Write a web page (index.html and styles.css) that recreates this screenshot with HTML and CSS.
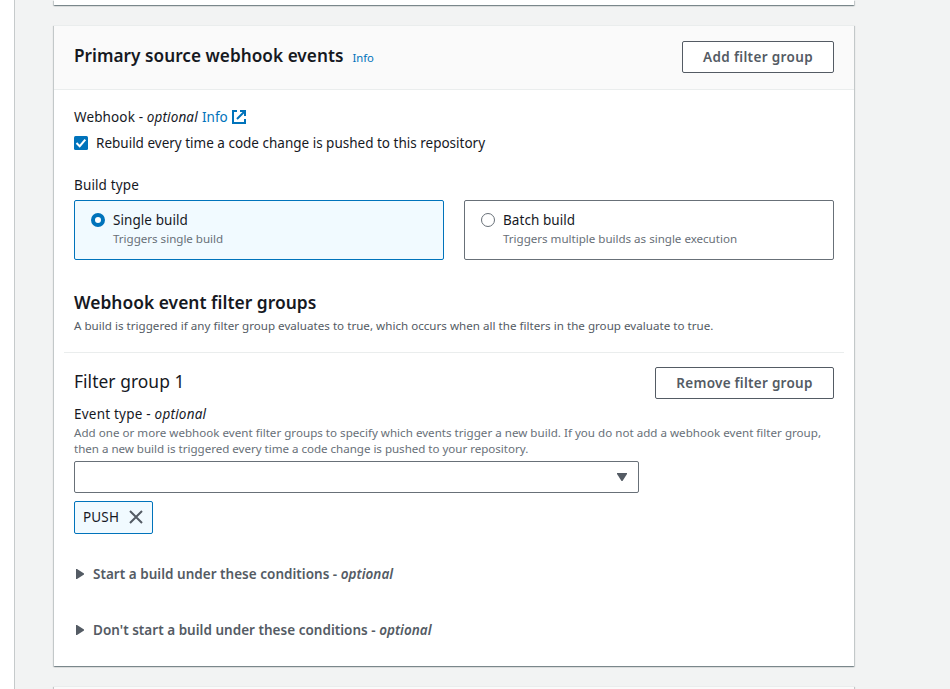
FILE: index.html
```
<!DOCTYPE html>
<html lang="en">
<head>
<meta charset="utf-8">
<title>Primary source webhook events</title>
<link rel="stylesheet" href="styles.css">
</head>
<body>
<main class="page">
  <section class="card card-previous"></section>

  <section class="card card-main">
    <header class="card-header">
      <h2 class="title">Primary source webhook events</h2>
      <a class="info-small">Info</a>
      <button class="button button-add">Add filter group</button>
    </header>

    <div class="card-body">
      <div class="label webhook-label">
        <span class="webhook-text">Webhook - <em>optional</em></span>
        <a class="info">Info</a>
        <svg class="external" viewBox="0 0 14 14" width="14" height="14" fill="none" stroke="#0073bb" stroke-width="2">
          <path d="M5 1H1v12h12V9"/>
          <path d="M8 1h5v5M13 1 5 9"/>
        </svg>
      </div>
      <label class="check-row">
        <svg class="checkbox" viewBox="0 0 14 14" width="14" height="14">
          <rect width="14" height="14" rx="1.5" fill="#0073bb"/>
          <path d="M2.5 7l3.2 3.2L11.3 3.6" fill="none" stroke="#fff" stroke-width="2"/>
        </svg>
        <span>Rebuild every time a code change is pushed to this repository</span>
      </label>

      <div class="label build-label">Build type</div>
      <div class="tiles">
        <div class="tile tile-selected">
          <span class="radio radio-on"></span>
          <div>
            <div class="tile-title">Single build</div>
            <div class="hint">Triggers single build</div>
          </div>
        </div>
        <div class="tile">
          <span class="radio"></span>
          <div>
            <div class="tile-title">Batch build</div>
            <div class="hint">Triggers multiple builds as single execution</div>
          </div>
        </div>
      </div>

      <h3 class="groups-title">Webhook event filter groups</h3>
      <p class="groups-text">A build is triggered if any filter group evaluates to true, which occurs when all the filters in the group evaluate to true.</p>
      <hr class="divider">

      <div class="group-head">
        <h4 class="group-title">Filter group 1</h4>
        <button class="button button-remove">Remove filter group</button>
      </div>
      <div class="label event-label">Event type - <em>optional</em></div>
      <p class="event-hint">Add one or more webhook event filter groups to specify which events trigger a new build. If you do not add a webhook event filter group,<br><span class="line-two">then a new build is triggered every time a code change is pushed to your repository.</span></p>
      <div class="select">
        <svg viewBox="0 0 10 8" width="10" height="8"><path d="M0 0h10v1L5.5 8h-1L0 1z" fill="#545b64"/></svg>
      </div>
      <div class="tag">
        <span>PUSH</span>
        <svg viewBox="0 0 14 14" width="14" height="14"><path d="M1 1l12 12M13 1L1 13" stroke="#545b64" stroke-width="2"/></svg>
      </div>

      <div class="expander expander-start">
        <svg viewBox="0 0 8 10" width="8" height="10"><path d="M0 0h1l7 4.5v1L1 10H0z" fill="#545b64"/></svg>
        <span>Start a build under these conditions - <em>optional</em></span>
      </div>
      <div class="expander">
        <svg viewBox="0 0 8 10" width="8" height="10"><path d="M0 0h1l7 4.5v1L1 10H0z" fill="#545b64"/></svg>
        <span>Don't start a build under these conditions - <em>optional</em></span>
      </div>
    </div>
  </section>

  <section class="card card-next"></section>
</main>
</body>
</html>
```
FILE: styles.css
```
* { box-sizing: border-box; }

body {
  margin: 0;
  height: 689px;
  overflow: hidden;
  background: #fff;
  color: #16191f;
  font: 13.5px/22px "Noto Sans", "Open Sans", sans-serif;
}

h2, h3, h4, p { margin: 0; }

.page {
  height: 689px;
  margin-left: 14px;
  padding-left: 39px;
  overflow: hidden;
  background: #f2f3f3;
  border-left: 1px solid #c6cacb;
}

.card {
  width: 800px;
  background: #fff;
  border-top: 1px solid #eaeded;
  box-shadow: 0 1px 1px 0 rgba(0, 28, 36, .3), 1px 1px 1px 0 rgba(0, 28, 36, .15), -1px 1px 1px 0 rgba(0, 28, 36, .15);
}
.card-previous { height: 5px; border-top: 0; }
.card-main { height: 641px; margin-top: 20px; }
.card-next { height: 60px; margin-top: 20px; background: #fafafa; }

.card-header {
  display: flex;
  align-items: flex-start;
  height: 64px;
  padding: 15px 20px 0;
  background: #fafafa;
  border-bottom: 1px solid #eaeded;
}
.title { margin-top: 4px; font-size: 17.2px; line-height: 22px; font-weight: 600; letter-spacing: .03px; }
.info-small { margin: 6px 0 0 9px; font-size: 11.3px; color: #0073bb; }

.button {
  height: 32px;
  margin-left: auto;
  padding: 0;
  border: 1px solid #545b64;
  border-radius: 2px;
  background: #fff;
  color: #545b64;
  font: 600 13.5px/22px "Noto Sans", "Open Sans", sans-serif;
}
.button-add { width: 152px; letter-spacing: .35px; }
.button-remove { width: 179px; letter-spacing: .27px; }

.card-body { padding: 16px 20px 0; }
.webhook-label { display: flex; }
.webhook-text { width: 124px; letter-spacing: .13px; white-space: nowrap; }
.info { margin-left: 4px; color: #0073bb; width: 25px; }
.external { margin: 4px 0 0 5px; }

.check-row { display: flex; margin-top: 4px; }
.checkbox { margin: 4px 8px 0 0; }

.build-label { margin-top: 20px; letter-spacing: .13px; }
.tiles { display: grid; grid-template-columns: 1fr 1fr; gap: 20px; margin-top: 4px; }
.tile {
  display: flex;
  height: 60px;
  padding: 8px 16px;
  border: 1px solid #687078;
  border-radius: 2px;
}
.tile-selected { background: #f1faff; border-color: #0073bb; }
.tile-title { letter-spacing: .07px; }
.hint { font-size: 11.6px; line-height: 16px; color: #687078; letter-spacing: -.02px; }
.radio {
  width: 14px;
  height: 14px;
  margin: 4px 8px 0 0;
  border: 1px solid #687078;
  border-radius: 50%;
  background: #fff;
}
.radio-on { border: 4px solid #0073bb; }

.groups-title { margin-top: 31px; font-size: 17.4px; line-height: 22px; font-weight: 600; letter-spacing: .02px; }
.groups-text { margin-top: 5px; font-size: 11.6px; line-height: 16px; color: #545b64; letter-spacing: .015px; white-space: nowrap; }
.divider { height: 1px; margin: 18px -10px 0; border: 0; background: #eaeded; }

.group-head { display: flex; align-items: flex-start; margin-top: 14px; }
.group-title { margin-top: 3px; font-size: 17.4px; line-height: 22px; font-weight: 400; letter-spacing: .05px; }
.event-label { margin-top: 4px; letter-spacing: .22px; }
.event-hint { font-size: 11.6px; line-height: 16px; color: #687078; letter-spacing: .007px; white-space: nowrap; }
.line-two { letter-spacing: -.03px; }

.select {
  display: flex;
  align-items: center;
  justify-content: flex-end;
  width: 565px;
  height: 32px;
  margin-top: 4px;
  padding-right: 11px;
  border: 1px solid #687078;
  border-radius: 2px;
}
.tag {
  display: flex;
  align-items: center;
  justify-content: space-between;
  width: 79px;
  height: 33px;
  margin-top: 8px;
  padding: 0 9px 1px 8px;
  border: 1px solid #0073bb;
  border-radius: 2px;
  background: #f1faff;
  letter-spacing: .15px;
}

.expander {
  display: flex;
  align-items: center;
  gap: 9px;
  height: 22px;
  margin-top: 34px;
  padding-left: 2px;
  color: #545b64;
  font-weight: 600;
  letter-spacing: .02px;
}
.expander-start { margin-top: 29px; }
```
